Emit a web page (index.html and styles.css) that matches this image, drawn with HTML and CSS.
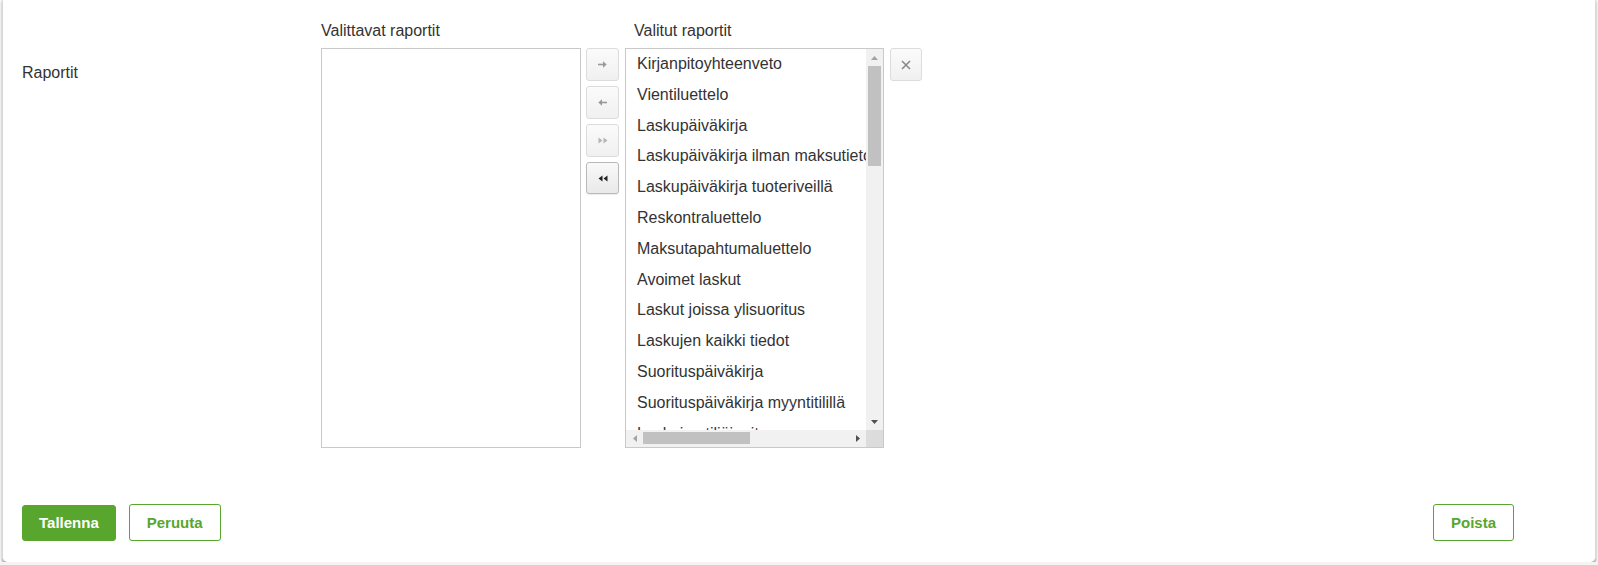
FILE: index.html
```html
<!DOCTYPE html>
<html lang="fi">
<head>
<meta charset="utf-8">
<title>Raportit</title>
<link rel="stylesheet" href="styles.css">
</head>
<body>
<div class="card">
  <div class="form-row">
    <div class="label">Raportit</div>
    <div class="dual">
      <div class="hdr">Valittavat raportit</div>
      <div class="hdr-spacer"></div>
      <div class="hdr hdr-right">Valitut raportit</div>
      <div class="hdr-spacer"></div>

      <div class="listbox"></div>

      <div class="moves">
        <button class="mv" type="button" aria-label="Siirrä">
          <svg width="9" height="7" viewBox="0 0 9 7"><path d="M0 3.5h5.5" stroke="#9a9a9a" stroke-width="1.6"/><path d="M5 0.3L8.7 3.5 5 6.7z" fill="#9a9a9a"/></svg>
        </button>
        <button class="mv" type="button" aria-label="Palauta">
          <svg width="9" height="7" viewBox="0 0 9 7"><path d="M3.5 3.5H9" stroke="#9a9a9a" stroke-width="1.6"/><path d="M4 0.3L0.3 3.5 4 6.7z" fill="#9a9a9a"/></svg>
        </button>
        <button class="mv" type="button" aria-label="Siirrä kaikki">
          <svg width="10" height="7" viewBox="0 0 10 7"><path d="M0.5 0.5L4.5 3.5 0.5 6.5z M5.5 0.5L9.5 3.5 5.5 6.5z" fill="#b4b4b4"/></svg>
        </button>
        <button class="mv mv-active" type="button" aria-label="Palauta kaikki">
          <svg width="10" height="7" viewBox="0 0 10 7"><path d="M4.5 0.5L0.5 3.5 4.5 6.5z M9.5 0.5L5.5 3.5 9.5 6.5z" fill="#222"/></svg>
        </button>
      </div>

      <div class="listbox chosen">
        <ul class="items">
          <li>Kirjanpitoyhteenveto</li>
          <li>Vientiluettelo</li>
          <li>Laskupäiväkirja</li>
          <li>Laskupäiväkirja ilman maksutietoja</li>
          <li>Laskupäiväkirja tuoteriveillä</li>
          <li>Reskontraluettelo</li>
          <li>Maksutapahtumaluettelo</li>
          <li>Avoimet laskut</li>
          <li>Laskut joissa ylisuoritus</li>
          <li>Laskujen kaikki tiedot</li>
          <li>Suorituspäiväkirja</li>
          <li>Suorituspäiväkirja myyntitilillä</li>
          <li>Laskujen tiliöinnit</li>
        </ul>
        <div class="vscroll">
          <span class="sb-btn"><svg width="7" height="4" viewBox="0 0 7 4"><path d="M0 4L3.5 0 7 4z" fill="#a3a3a3"/></svg></span>
          <span class="vthumb"></span>
          <span class="sb-fill"></span>
          <span class="sb-btn"><svg width="7" height="4" viewBox="0 0 7 4"><path d="M0 0L3.5 4 7 0z" fill="#505050"/></svg></span>
        </div>
        <div class="hscroll">
          <span class="sb-btn"><svg width="4" height="7" viewBox="0 0 4 7"><path d="M4 0L0 3.5 4 7z" fill="#a3a3a3"/></svg></span>
          <span class="hthumb"></span>
          <span class="sb-fill"></span>
          <span class="sb-btn"><svg width="4" height="7" viewBox="0 0 4 7"><path d="M0 0L4 3.5 0 7z" fill="#505050"/></svg></span>
        </div>
        <div class="corner"></div>
      </div>

      <div class="side">
        <button class="clear" type="button" aria-label="Tyhjennä">
          <svg width="10" height="10" viewBox="0 0 10 10"><path d="M1 1L9 9M9 1L1 9" stroke="#8a8a8a" stroke-width="1.6"/></svg>
        </button>
      </div>
    </div>
  </div>

  <div class="actions">
    <div class="actions-left">
      <button class="btn btn-primary" type="button">Tallenna</button>
      <button class="btn btn-outline" type="button">Peruuta</button>
    </div>
    <button class="btn btn-outline" type="button">Poista</button>
  </div>
</div>
</body>
</html>
```

FILE: styles.css
```css
html, body {
  margin: 0;
  padding: 0;
}

body {
  background: #f4f4f4;
  font-family: "Liberation Sans", Arial, sans-serif;
  color: #333;
  font-size: 16px;
  line-height: 18px;
}

.card {
  margin: 0 2px 0 2px;
  background: #fff;
  border-left: 1px solid #d9d9d9;
  border-right: 1px solid #d9d9d9;
  border-radius: 0 0 5px 5px;
  box-shadow: 0 2px 2px rgba(0, 0, 0, 0.38);
  padding: 22px 81px 20px 19px;
  height: 562px;
  box-sizing: border-box;
}

.form-row {
  display: flex;
}

.label {
  width: 299px;
  flex: none;
  padding-top: 42px;
  color: #333;
}

.dual {
  display: grid;
  grid-template-columns: 260px 33px 260px 33px;
  grid-template-rows: 26px 400px;
  column-gap: 5px;
}

.dual > .listbox.chosen { margin-left: 1px; }
.dual > .side { margin-left: 1px; }

.hdr {
  color: #333;
  white-space: nowrap;
}

.hdr-right {
  grid-column: 3;
  padding-left: 10px;
}

.listbox {
  border: 1px solid #c9c9c9;
  box-sizing: border-box;
  background: #fff;
}

.moves {
  display: flex;
  flex-direction: column;
  gap: 5px;
}

.mv, .clear {
  width: 33px;
  height: 33px;
  padding: 0;
  margin: 0;
  border: 1px solid #dcdcdc;
  border-radius: 3px;
  background: linear-gradient(#fbfbfb, #f0f0f0);
  display: flex;
  align-items: center;
  justify-content: center;
  box-sizing: border-box;
}

.mv-active {
  height: 32px;
  border-color: #b9b9b9;
  background: linear-gradient(#f9f9f9, #e9e9e9);
  box-shadow: 0 1px 1px rgba(0, 0, 0, 0.08);
}

.clear {
  width: 32px;
}

.chosen {
  display: grid;
  grid-template-columns: 1fr 17px;
  grid-template-rows: 1fr 17px;
  overflow: hidden;
}

.items {
  list-style: none;
  margin: 0;
  padding: 0;
  overflow: hidden;
  min-width: 0;
  min-height: 0;
}

.items li {
  height: 30.8px;
  line-height: 30.8px;
  padding-left: 11px;
  white-space: nowrap;
  color: #333;
}

.vscroll {
  background: #f1f1f1;
  display: flex;
  flex-direction: column;
  min-height: 0;
}

.hscroll {
  background: #f1f1f1;
  display: flex;
  min-width: 0;
}

.sb-btn {
  flex: none;
  width: 17px;
  height: 17px;
  display: flex;
  align-items: center;
  justify-content: center;
}

.sb-fill { flex: 1; }

.vthumb {
  flex: none;
  height: 100px;
  margin: 0 2px;
  background: #c1c1c1;
}

.hthumb {
  flex: none;
  width: 107px;
  margin: 2px 0 3px;
  background: #c1c1c1;
}

.corner {
  background: #dcdcdc;
}

.actions {
  margin-top: 56px;
  display: flex;
  justify-content: space-between;
  align-items: center;
}

.actions-left {
  display: flex;
  gap: 13px;
  align-items: center;
}

.btn {
  font-family: "Liberation Sans", Arial, sans-serif;
  font-weight: bold;
  font-size: 15px;
  height: 37px;
  padding: 0 16px;
  border-radius: 3px;
  border: 1px solid #58a62e;
  cursor: pointer;
}

.btn-primary {
  background: #58a62e;
  color: #fff;
  height: 36px;
  padding: 0 16px;
}

.btn-outline {
  background: #fff;
  color: #58a62e;
  padding: 0 17px;
}
```
